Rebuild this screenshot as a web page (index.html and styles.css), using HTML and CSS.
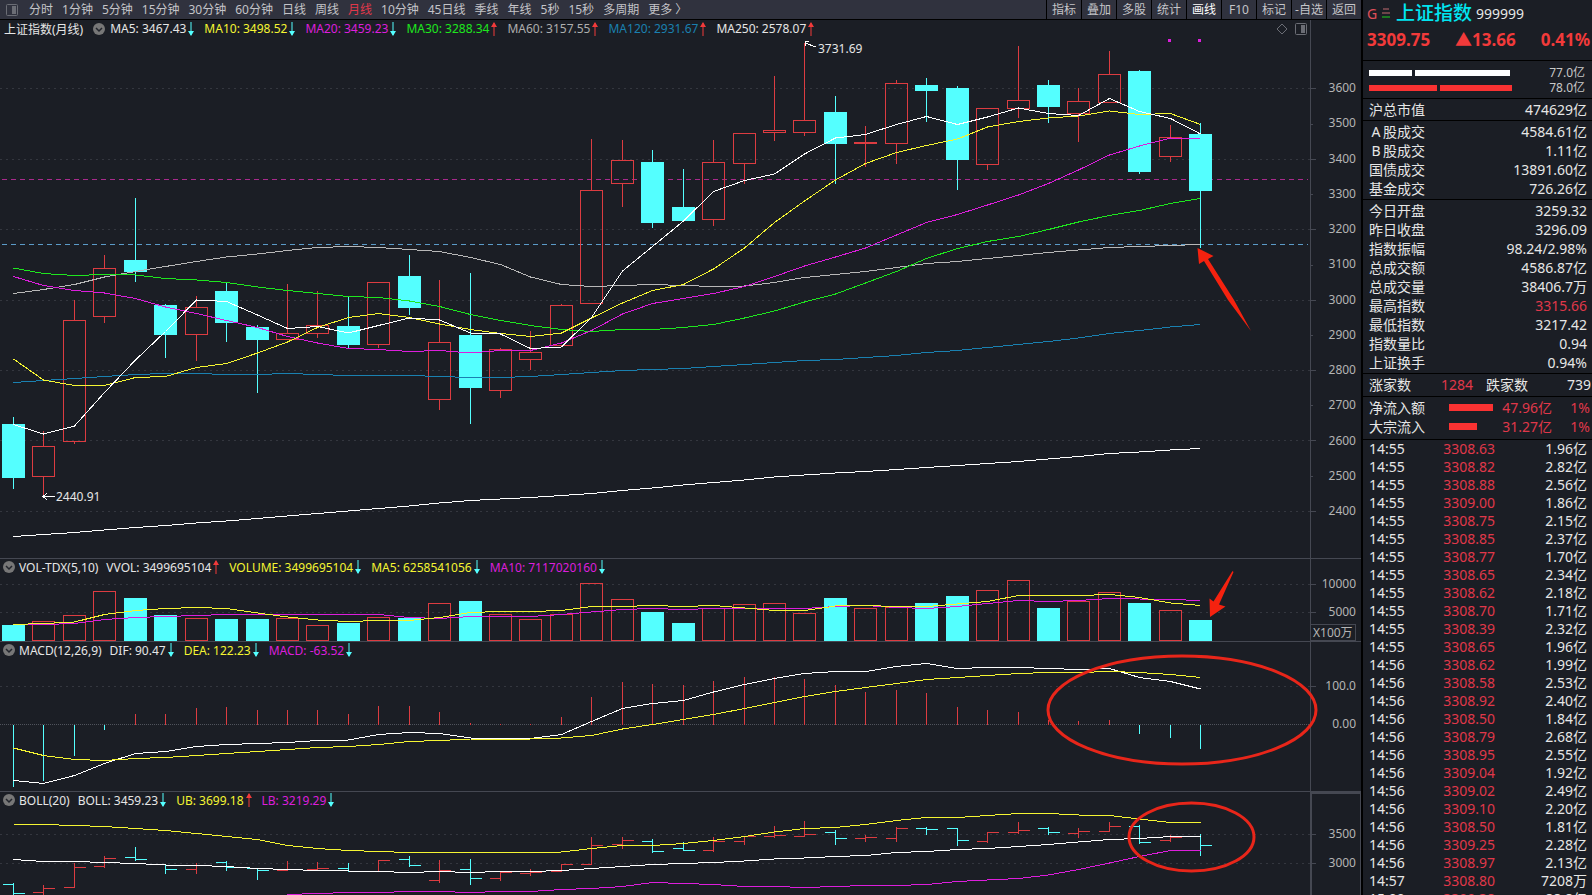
FILE: index.html
```html
<!DOCTYPE html>
<html lang="zh-CN">
<head>
    <meta charset="UTF-8">
    <meta name="viewport" content="width=device-width, initial-scale=1.0">
    <title>上证指数 999999</title>
    <link rel="stylesheet" href="styles.css">
</head>
<body>
    <svg class="sprite" aria-hidden="true">
        <symbol id="up" viewBox="0 0 6 14"><path d="M3 1V14" stroke="#f23a3a" fill="none"/><path d="M0 5L3 0L6 5Z" fill="#f23a3a"/></symbol>
        <symbol id="down" viewBox="0 0 6 14"><path d="M3 0V13" stroke="#54ffff" fill="none"/><path d="M0 9L3 14L6 9Z" fill="#54ffff"/></symbol>
        <symbol id="fold" viewBox="0 0 12 12"><circle cx="6" cy="6" r="6" fill="#777"/><path d="M3 5L6 8L9 5" stroke="#22252c" stroke-width="1.5" fill="none"/></symbol>
        <symbol id="dock" viewBox="0 0 12 12"><rect x=".5" y=".5" width="11" height="11" rx="1" stroke="#6b6d75" fill="none"/><rect x="6" y="2" width="4" height="8" fill="#6b6d75"/></symbol>
    </svg>

    <div class="workspace">
        <nav class="toolbar">
            <div class="periods">
                <button class="icon-btn" aria-label="侧栏"><svg class="dock-icon"><use href="#dock"/></svg></button>
                <button>分时</button>
                <button>1分钟</button>
                <button>5分钟</button>
                <button>15分钟</button>
                <button>30分钟</button>
                <button>60分钟</button>
                <button>日线</button>
                <button>周线</button>
                <button class="active">月线</button>
                <button>10分钟</button>
                <button>45日线</button>
                <button>季线</button>
                <button>年线</button>
                <button>5秒</button>
                <button>15秒</button>
                <button>多周期</button>
                <button>更多 〉</button>
            </div>
            <div class="tools">
                <button>指标</button>
                <button>叠加</button>
                <button>多股</button>
                <button>统计</button>
                <button class="bright">画线</button>
                <button>F10</button>
                <button>标记</button>
                <button>-自选</button>
                <button>返回</button>
            </div>
        </nav>

        <main class="charts">
            <section class="pane pane-main">
                <svg class="plot" id="mainPlot" viewBox="0 20 1310 538" preserveAspectRatio="none"></svg>
                <div class="legend legend-main">
                    <span class="name">上证指数(月线)</span>
                    <svg class="fold-icon"><use href="#fold"/></svg>
                    <span class="item">MA5: 3467.43<svg class="arrow"><use href="#down"/></svg></span>
                    <span class="item yellow">MA10: 3498.52<svg class="arrow"><use href="#down"/></svg></span>
                    <span class="item magenta">MA20: 3459.23<svg class="arrow"><use href="#down"/></svg></span>
                    <span class="item green">MA30: 3288.34<svg class="arrow"><use href="#up"/></svg></span>
                    <span class="item grey">MA60: 3157.55<svg class="arrow"><use href="#up"/></svg></span>
                    <span class="item blue">MA120: 2931.67<svg class="arrow"><use href="#up"/></svg></span>
                    <span class="item">MA250: 2578.07<svg class="arrow"><use href="#up"/></svg></span>
                    <span class="corner">
                        <svg class="diamond-icon" viewBox="0 0 12 12"><path d="M6 1L11 6L6 11L1 6Z" stroke="#6b6d75" fill="none"/></svg>
                        <svg class="dock-icon"><use href="#dock"/></svg>
                    </span>
                </div>
                <ul class="axis">
                    <li>3600</li>
                    <li>3500</li>
                    <li>3400</li>
                    <li>3300</li>
                    <li>3200</li>
                    <li>3100</li>
                    <li>3000</li>
                    <li>2900</li>
                    <li>2800</li>
                    <li>2700</li>
                    <li>2600</li>
                    <li>2500</li>
                    <li>2400</li>
                </ul>
                <span class="mark mark-high">3731.69</span>
                <span class="mark mark-low">2440.91</span>
            </section>

            <section class="pane pane-vol">
                <svg class="plot" id="volPlot" viewBox="0 559 1310 82" preserveAspectRatio="none"></svg>
                <div class="legend">
                    <svg class="fold-icon"><use href="#fold"/></svg>
                    <span class="name">VOL-TDX(5,10)</span>
                    <span class="item">VVOL: 3499695104<svg class="arrow"><use href="#up"/></svg></span>
                    <span class="item yellow">VOLUME: 3499695104<svg class="arrow"><use href="#down"/></svg></span>
                    <span class="item yellow">MA5: 6258541056<svg class="arrow"><use href="#down"/></svg></span>
                    <span class="item magenta">MA10: 7117020160<svg class="arrow"><use href="#down"/></svg></span>
                </div>
                <ul class="axis">
                    <li>10000</li>
                    <li>5000</li>
                    <li class="unit">X100万</li>
                </ul>
            </section>

            <section class="pane pane-macd">
                <svg class="plot" id="macdPlot" viewBox="0 642 1310 149" preserveAspectRatio="none"></svg>
                <div class="legend">
                    <svg class="fold-icon"><use href="#fold"/></svg>
                    <span class="name">MACD(12,26,9)</span>
                    <span class="item">DIF: 90.47<svg class="arrow"><use href="#down"/></svg></span>
                    <span class="item yellow">DEA: 122.23<svg class="arrow"><use href="#down"/></svg></span>
                    <span class="item magenta">MACD: -63.52<svg class="arrow"><use href="#down"/></svg></span>
                </div>
                <ul class="axis">
                    <li>100.0</li>
                    <li>0.00</li>
                </ul>
            </section>

            <section class="pane pane-boll">
                <svg class="plot" id="bollPlot" viewBox="0 792 1310 103" preserveAspectRatio="none"></svg>
                <div class="legend">
                    <svg class="fold-icon"><use href="#fold"/></svg>
                    <span class="name">BOLL(20)</span>
                    <span class="item">BOLL: 3459.23<svg class="arrow"><use href="#down"/></svg></span>
                    <span class="item yellow">UB: 3699.18<svg class="arrow"><use href="#up"/></svg></span>
                    <span class="item magenta">LB: 3219.29<svg class="arrow"><use href="#down"/></svg></span>
                </div>
                <ul class="axis">
                    <li>3500</li>
                    <li>3000</li>
                </ul>
            </section>

            <!-- hand-drawn notes over all four panes -->
            <svg class="notes" viewBox="0 20 1361 875" preserveAspectRatio="none">
                <path class="note-fill" d="M1197.5 248L1213.5 256L1208 259L1234 300L1251 331L1228 300L1204 261L1199 264Z"/>
                <path class="note-fill" d="M1210 617L1209.5 598.5L1213.5 601.5L1232.5 571L1233.5 572L1219 604.5L1225.5 606.5Z"/>
                <ellipse class="note-line" cx="1182" cy="710" rx="134" ry="54"/>
                <ellipse class="note-line" cx="1191.5" cy="837" rx="62.5" ry="34"/>
            </svg>
        </main>
    </div>

    <aside class="quote">
        <header class="quote-head">
            <div class="title">
                <span class="flag">G</span>
                <svg class="menu-icon" viewBox="0 0 8 12"><path d="M1 2H7M0 6H8" stroke="#c06a70"/><path d="M0 10H8" stroke="#1fd01f"/></svg>
                <h1>上证指数</h1>
                <span class="code">999999</span>
            </div>
            <div class="price">
                <span>3309.75</span>
                <span>▲13.66</span>
                <span>0.41%</span>
            </div>
        </header>

        <div class="group strength">
            <div class="row"><span class="bars white"><i style="width:43px"></i><i style="width:95px"></i></span><span>77.0亿</span></div>
            <div class="row"><span class="bars red-bar"><i style="width:68px"></i><i style="width:72px"></i></span><span>78.0亿</span></div>
        </div>

        <dl class="group">
            <div class="row"><dt>沪总市值</dt><dd>474629亿</dd></div>
        </dl>
        <dl class="group">
            <div class="row"><dt><span class="wide">A</span>股成交</dt><dd>4584.61亿</dd></div>
            <div class="row"><dt><span class="wide">B</span>股成交</dt><dd>1.11亿</dd></div>
            <div class="row"><dt>国债成交</dt><dd>13891.60亿</dd></div>
            <div class="row"><dt>基金成交</dt><dd>726.26亿</dd></div>
        </dl>
        <dl class="group">
            <div class="row"><dt>今日开盘</dt><dd>3259.32</dd></div>
            <div class="row"><dt>昨日收盘</dt><dd>3296.09</dd></div>
            <div class="row"><dt>指数振幅</dt><dd>98.24/2.98%</dd></div>
            <div class="row"><dt>总成交额</dt><dd>4586.87亿</dd></div>
            <div class="row"><dt>总成交量</dt><dd>38406.7万</dd></div>
            <div class="row"><dt>最高指数</dt><dd class="red">3315.66</dd></div>
            <div class="row"><dt>最低指数</dt><dd>3217.42</dd></div>
            <div class="row"><dt>指数量比</dt><dd>0.94</dd></div>
            <div class="row"><dt>上证换手</dt><dd>0.94%</dd></div>
        </dl>
        <div class="group breadth">
            <span>涨家数</span><span class="red">1284</span><span>跌家数</span><span>739</span>
        </div>
        <div class="group flow">
            <span>净流入额</span><i class="flow-bar" style="width:44px"></i><span class="red">47.96亿</span><span class="red">1%</span>
            <span>大宗流入</span><i class="flow-bar" style="width:28px"></i><span class="red">31.27亿</span><span class="red">1%</span>
        </div>

        <div class="group ticks">
            <table>
                <tbody>
                    <tr><td>14:55</td><td>3308.63</td><td>1.96亿</td></tr>
                    <tr><td>14:55</td><td>3308.82</td><td>2.82亿</td></tr>
                    <tr><td>14:55</td><td>3308.88</td><td>2.56亿</td></tr>
                    <tr><td>14:55</td><td>3309.00</td><td>1.86亿</td></tr>
                    <tr><td>14:55</td><td>3308.75</td><td>2.15亿</td></tr>
                    <tr><td>14:55</td><td>3308.85</td><td>2.37亿</td></tr>
                    <tr><td>14:55</td><td>3308.77</td><td>1.70亿</td></tr>
                    <tr><td>14:55</td><td>3308.65</td><td>2.34亿</td></tr>
                    <tr><td>14:55</td><td>3308.62</td><td>2.18亿</td></tr>
                    <tr><td>14:55</td><td>3308.70</td><td>1.71亿</td></tr>
                    <tr><td>14:55</td><td>3308.39</td><td>2.32亿</td></tr>
                    <tr><td>14:55</td><td>3308.65</td><td>1.96亿</td></tr>
                    <tr><td>14:56</td><td>3308.62</td><td>1.99亿</td></tr>
                    <tr><td>14:56</td><td>3308.58</td><td>2.53亿</td></tr>
                    <tr><td>14:56</td><td>3308.92</td><td>2.40亿</td></tr>
                    <tr><td>14:56</td><td>3308.50</td><td>1.84亿</td></tr>
                    <tr><td>14:56</td><td>3308.79</td><td>2.68亿</td></tr>
                    <tr><td>14:56</td><td>3308.95</td><td>2.55亿</td></tr>
                    <tr><td>14:56</td><td>3309.04</td><td>1.92亿</td></tr>
                    <tr><td>14:56</td><td>3309.02</td><td>2.49亿</td></tr>
                    <tr><td>14:56</td><td>3309.10</td><td>2.20亿</td></tr>
                    <tr><td>14:56</td><td>3308.50</td><td>1.81亿</td></tr>
                    <tr><td>14:56</td><td>3309.25</td><td>2.28亿</td></tr>
                    <tr><td>14:56</td><td>3308.97</td><td>2.13亿</td></tr>
                    <tr><td>14:57</td><td>3308.80</td><td>7208万</td></tr>
                    <tr><td>15:00</td><td>3309.38</td><td>88.8亿</td></tr>
                </tbody>
            </table>
        </div>
    </aside>

    <script src="script.js"></script>
</body>
</html>
```

FILE: styles.css
```css
:root {
    --bg: #1b1e25;
    --bar: #30323e;
    --line: #454852;
    --text: #e6e6e6;
    --muted: #b4b4b4;
    --red: #f23a3a;
    --tick-red: #e0384a;
    --cyan: #54ffff;
    --yellow: #f5f532;
    --magenta: #dc1edc;
    --green: #1ee61e;
    --blue: #1a80b0;
    --note: #f5220f;
}

* {
    margin: 0;
    padding: 0;
    box-sizing: border-box;
}

body {
    font-family: 'Noto Sans', 'Noto Sans CJK SC', sans-serif;
    font-size: 12px;
    background-color: var(--bg);
    color: var(--text);
    height: 100vh;
    overflow: hidden;
    display: grid;
    grid-template-columns: minmax(0, 1fr) 231px;
}

button {
    font: inherit;
    color: #c4c4c8;
    background: none;
    border: none;
    cursor: pointer;
    white-space: nowrap;
}

.sprite {
    display: none;
}

.workspace {
    display: flex;
    flex-direction: column;
    height: 100vh;
}

/* toolbar */
.toolbar {
    display: flex;
    justify-content: space-between;
    height: 20px;
    background-color: var(--bar);
    border-bottom: 1px solid #000;
    line-height: 18px;
}

.periods {
    display: flex;
    gap: 9px;
    padding-left: 6px;
}

.periods .icon-btn {
    margin-right: 2px;
}

.dock-icon,
.fold-icon,
.diamond-icon {
    display: block;
    width: 12px;
    height: 12px;
    flex: none;
}

.periods .active {
    color: var(--tick-red);
}

.tools {
    display: flex;
}

.tools button {
    width: 35px;
    border-left: 1px solid #000;
}

.tools .bright {
    color: #fff;
}

/* chart panes */
.charts {
    position: relative;
    flex: 1;
    display: grid;
    grid-template-rows: 538fr 83fr 150fr 104fr;
    min-height: 0;
}

.pane {
    position: relative;
    display: grid;
    grid-template-columns: minmax(0, 1fr) 51px;
    grid-template-rows: minmax(0, 1fr);
    min-height: 0;
}

.pane + .pane {
    border-top: 1px solid var(--line);
}

.plot {
    grid-area: 1 / 1;
    width: 100%;
    height: 100%;
    overflow: visible;
}

.legend {
    grid-area: 1 / 1;
    align-self: start;
    display: flex;
    align-items: center;
    height: 16px;
    padding-left: 3px;
    gap: 10px;
    white-space: nowrap;
}

.legend .fold-icon + .name {
    margin-left: -6px;
    margin-right: -2px;
}

.legend-main {
    height: 17px;
    padding-left: 4px;
    padding-right: 3px;
}

.legend .fold-icon + .item {
    margin-left: -5px;
}

.item {
    display: flex;
    align-items: center;
    gap: 2px;
}

.arrow {
    width: 6px;
    height: 14px;
}

.corner {
    display: flex;
    gap: 7px;
    margin-left: auto;
}

.yellow { color: var(--yellow); }
.magenta { color: var(--magenta); }
.green { color: var(--green); }
.grey { color: #aeaeae; }
.blue { color: var(--blue); }
.red { color: var(--tick-red); }

.axis {
    list-style: none;
    border-left: 1px solid var(--line);
    color: var(--muted);
    text-align: right;
    line-height: 16px;
    padding-right: 5px;
    display: flex;
    flex-direction: column;
}

.pane-main .axis {
    justify-content: space-between;
    padding-top: 60px;
    padding-bottom: 39px;
}

.pane-vol .axis {
    justify-content: flex-end;
    gap: 12px;
}

.pane-macd .axis {
    padding-top: 36px;
    gap: 22px;
}

.pane-boll .axis {
    padding-top: 32px;
    gap: 13px;
    border: 2px solid var(--line);
    border-width: 2px 1px 0 2px;
    padding-right: 4px;
}

.axis .unit {
    align-self: flex-start;
    border: 1px solid var(--line);
    border-left: none;
    padding: 0 2px;
    margin-top: -8px;
    line-height: 15px;
    white-space: nowrap;
}

.mark {
    position: absolute;
    line-height: 16px;
}

.mark-high {
    left: 818px;
    top: 21px;
}

.mark-low {
    left: 56px;
    top: 469px;
}

.notes {
    position: absolute;
    inset: 0;
    width: 100%;
    height: 100%;
    pointer-events: none;
}

.note-fill {
    fill: var(--note);
}

.note-line {
    fill: none;
    stroke: #e8261a;
    stroke-width: 3;
}

/* series */
.plot * {
    fill: none;
    vector-effect: non-scaling-stroke;
    shape-rendering: crispEdges;
}

.plot .grid { stroke: #34373f; stroke-dasharray: 2 4; }
.plot .grid-tick { stroke: var(--line); }
.plot .zero { stroke: #50535c; stroke-dasharray: 1 1; }
.plot .level-magenta { stroke: #a82a8c; stroke-dasharray: 5 4; }
.plot .level-blue { stroke: #5b9bc8; stroke-dasharray: 5 4; }
.plot .up { stroke: #dc3c41; }
.plot .down { stroke: var(--cyan); }
.plot rect.down { fill: var(--cyan); }
.plot .dot { fill: var(--magenta); }
.plot .s-white { stroke: #fff; }
.plot .s-light { stroke: #b8b8b8; }
.plot .s-yellow { stroke: var(--yellow); }
.plot .s-magenta { stroke: var(--magenta); }
.plot .s-green { stroke: var(--green); }
.plot .s-blue { stroke: var(--blue); }

/* quote sidebar */
.quote {
    border-left: 2px solid #000;
    height: 100vh;
    overflow: hidden;
    font-size: 14px;
    line-height: 19px;
}

.quote-head {
    height: 60px;
}

.title {
    display: flex;
    align-items: center;
    height: 26px;
    padding-left: 4px;
}

.title .flag {
    width: 15px;
    color: #e0505a;
    font-size: 14px;
}

.title .menu-icon {
    width: 8px;
    height: 12px;
    margin-right: 6px;
}

.title h1 {
    font-size: 19px;
    font-weight: 500;
    color: #00e5f0;
    margin-right: 4px;
}

.price {
    display: flex;
    justify-content: space-between;
    padding: 4px 2px 0 4px;
    font-size: 17px;
    font-weight: bold;
    color: var(--red);
}

.group {
    border-top: 1px solid #000;
    padding: 1px 5px 1px 6px;
}

.row {
    display: flex;
    justify-content: space-between;
}

.wide {
    display: inline-block;
    width: 14px;
    text-align: center;
}

.strength {
    height: 38px;
    padding: 4px 7px 3px 6px;
    font-size: 12px;
    line-height: 15px;
}

.strength .row {
    align-items: center;
    color: #c8c8c8;
}

.bars {
    display: flex;
    gap: 3px;
}

.bars i {
    height: 6px;
    background-color: #fff;
}

.bars.red-bar i,
.flow-bar {
    background-color: #fa3232;
}

.breadth {
    display: grid;
    grid-template-columns: 72px 45px 1fr auto;
    padding: 1px 1px 2px 6px;
}

.flow {
    display: grid;
    grid-template-columns: 80px 46px 1fr 38px;
    align-items: center;
    padding: 1px 2px 3px 6px;
    text-align: right;
}

.flow span:nth-child(4n + 1) {
    text-align: left;
}

.flow-bar {
    height: 7px;
}

.ticks {
    padding: 0 5px 0 6px;
}

.ticks table {
    width: 100%;
    border-collapse: collapse;
    table-layout: fixed;
}

.ticks td {
    height: 18px;
    line-height: 18px;
    text-align: right;
}

.ticks td:first-child {
    width: 40px;
    text-align: left;
}

.ticks td:nth-child(2) {
    width: 86px;
    color: var(--tick-red);
}
```

FILE: script.js
```js
const NS = 'http://www.w3.org/2000/svg';
const COUNT = 40;

// centre of bar i
function barX(i) {
    return Math.round(13 + 30.44 * i) + 0.5;
}

function add(plot, tag, cls, attrs) {
    const el = document.createElementNS(NS, tag);
    el.setAttribute('class', cls);
    for (const key in attrs) el.setAttribute(key, attrs[key]);
    plot.appendChild(el);
}

function path(plot, cls, d) {
    add(plot, 'path', cls, { d });
}

function series(plot, cls, values, start = 0) {
    const points = values.map((y, i) => barX(i + start) + ',' + y).join(' ');
    add(plot, 'polyline', cls, { points });
}

function grid(plot, rows) {
    rows.forEach(y => {
        path(plot, 'grid', `M0 ${y}H1310`);
        path(plot, 'grid-tick', `M1310 ${y}H1316`);
    });
}

// [high, top, bottom, low, direction]
const candles = [
    [417, 424, 478, 489, 'down'], [431, 446, 476, 497, 'up'], [300, 320, 441, 444, 'up'], [255, 268, 316, 323, 'up'],
    [198, 260, 272, 282, 'down'], [304, 305, 335, 358, 'down'], [296, 307, 334, 361, 'up'], [283, 291, 323, 342, 'down'],
    [325, 327, 340, 393, 'down'], [284, 333, 339, 340, 'up'], [291, 325, 333, 338, 'up'], [297, 326, 345, 348, 'down'],
    [282, 282, 344, 348, 'up'], [255, 276, 308, 315, 'down'], [280, 342, 399, 410, 'up'], [273, 335, 388, 424, 'down'],
    [348, 349, 390, 398, 'up'], [331, 352, 359, 370, 'up'], [304, 305, 345, 346, 'up'], [139, 190, 303, 304, 'up'],
    [140, 160, 183, 207, 'up'], [150, 162, 223, 228, 'down'], [169, 207, 221, 221, 'down'], [140, 162, 219, 226, 'up'],
    [133, 133, 163, 184, 'up'], [76, 130, 132, 141, 'up'], [43, 120, 132, 136, 'up'], [96, 112, 144, 184, 'down'],
    [126, 142, 143, 167, 'up'], [80, 83, 143, 164, 'up'], [78, 85, 91, 122, 'down'], [86, 88, 160, 190, 'down'],
    [108, 108, 164, 170, 'up'], [46, 100, 108, 118, 'up'], [80, 85, 107, 123, 'down'], [88, 101, 113, 142, 'up'],
    [51, 74, 102, 103, 'up'], [70, 71, 172, 174, 'down'], [125, 137, 156, 162, 'up'], [123, 134, 191, 248, 'down']
];

const volumeTop = [625, 621, 615, 591, 598, 615, 618, 619, 619, 618, 625, 623, 617, 618, 603, 601, 614, 619, 614, 583,
    599, 612, 623, 608, 604, 603, 613, 598, 608, 607, 603, 596, 590, 580, 608, 601, 592, 603, 610, 620];

const macdEnd = [787, 781, 756, 730, 714, 714, 708, 707, 710, 710, 710, 714, 706, 706, 712, 723, 724, 724, 717, 697,
    682, 684, 685, 681, 677, 677, 679, 685, 692, 690, 693, 707, 710, 712, 720, 721, 720, 734, 738, 749];

function drawMain() {
    const plot = document.getElementById('mainPlot');
    grid(plot, [88.5, 159.5, 229.5, 300.5, 370.5, 440.5, 511.5]);
    [124.5, 194.5, 265.5, 335.5, 405.5, 476.5].forEach(y => path(plot, 'grid-tick', `M1310 ${y}H1313`));
    path(plot, 'level-magenta', 'M2 179.5H1308');
    path(plot, 'level-blue', 'M2 244.5H1308');

    candles.forEach(([high, top, bottom, low, dir], i) => {
        const x = barX(i);
        // the filled body already covers its own bottom edge
        const height = dir === 'down' ? bottom - top - 1 : bottom - top;
        path(plot, dir, `M${x} ${high}V${top}M${x} ${bottom}V${low}`);
        add(plot, 'rect', dir, { x: x - 11, y: top + 0.5, width: 22, height });
    });

    series(plot, 's-light', [293.5, 289.5, 284.5, 277, 271.5, 266.5, 261.5, 257, 254, 250.5, 247.5, 246.5, 247.5, 249.5, 251.5, 257.5, 264.5, 277, 284.5, 286.5,
        285.5, 284.5, 285.5, 286.5, 286, 282.5, 277.5, 274.5, 271.5, 267.5, 263.5, 261.5, 258.5, 255.5, 252.5, 250, 247.5, 246.5, 245.5, 244.5]);
    series(plot, 's-blue', [382.5, 380.5, 378.5, 376.5, 374.5, 373.5, 373.5, 374.5, 374.5, 373.5, 374.5, 375.5, 375.5, 375.5, 376.5, 377.5, 377.5, 376.5, 374.5, 372.5,
        370.5, 369.5, 368.5, 366.5, 364.5, 362.5, 360.5, 359.5, 357.5, 355.5, 352.5, 350.5, 347.5, 344.5, 341.5, 338, 333.5, 330.5, 327, 324.5]);
    series(plot, 's-white', [536.5, 534.5, 532.5, 530, 527.5, 525.5, 523, 521, 518.5, 516, 513.5, 511, 508.5, 506, 503, 500.5, 499, 497.5, 495.5, 493.5,
        490.5, 488, 485, 482.5, 480, 477, 475, 473, 471.5, 469.5, 467.5, 465.5, 463.5, 461.5, 459, 456.5, 453.5, 452, 450, 448.5]);
    series(plot, 's-green', [268, 273.5, 275.5, 274.5, 275, 278.5, 280, 282.5, 287, 290.5, 293.5, 296.5, 297.5, 301, 306.5, 314.5, 320.5, 325.5, 329.5, 331.5,
        329.5, 329.5, 327.5, 324.5, 318, 311, 302, 294, 283, 271.5, 258.5, 248.5, 241.5, 236.5, 229.5, 222, 215.5, 210.5, 203.5, 198.5]);
    series(plot, 's-magenta', [276.5, 285.5, 290.5, 293, 298.5, 307, 313.5, 320.5, 327.5, 336.5, 343, 348.5, 349.5, 351.5, 350.5, 353, 350.5, 350.5, 343, 330.5,
        314, 303.5, 298.5, 293.5, 286.5, 276.5, 266, 257, 248, 235, 222.5, 214.5, 205, 195, 183.5, 170, 155, 146, 138, 138.5]);
    series(plot, 's-yellow', [359, 380, 385.5, 385.5, 377.5, 376.5, 367.5, 363.5, 353, 342, 327.5, 317.5, 313.5, 317.5, 324, 329.5, 333.5, 336.5, 333, 318,
        303, 290.5, 284.5, 269, 248, 222.5, 201, 180, 163.5, 152.5, 145.5, 139, 127, 121.5, 118, 116, 111, 114.5, 113.5, 124.5]);
    series(plot, 's-white', [424.5, 434, 426, 392.5, 360, 331.5, 300, 301.5, 315, 328.5, 326.5, 333, 325.5, 318, 320, 333, 334, 348.5, 347, 317.5,
        271, 246.5, 221, 191.5, 180.5, 174, 154, 138, 134.5, 124.5, 116.5, 124.5, 117, 108, 113.5, 115.5, 98.5, 111.5, 118.5, 134]);

    // pointers for the highest and lowest price, and the two event dots
    path(plot, 's-white', 'M805 43L816 47M809 41H805V46');
    path(plot, 's-white', 'M43 496.5H55M47 493L43 496.5L47 500');
    add(plot, 'rect', 'dot', { x: 1168, y: 39, width: 3, height: 3 });
    add(plot, 'rect', 'dot', { x: 1198, y: 39, width: 3, height: 3 });
}

function drawVolume() {
    const plot = document.getElementById('volPlot');
    grid(plot, [584.5, 612.5]);
    volumeTop.forEach((top, i) => {
        add(plot, 'rect', candles[i][4], { x: barX(i) - 11, y: top + 0.5, width: 22, height: 640 - top });
    });
    series(plot, 's-magenta', [624, 624.5, 623.5, 619.5, 617.5, 616.5, 615.5, 614.5, 614.5, 614.5, 614.5, 614.5, 614.5, 617.5, 618.5, 616.5, 616.5, 616.5, 614.5, 612,
        609.5, 608.5, 609.5, 608.5, 608.5, 608.5, 608.5, 606.5, 605.5, 607.5, 608.5, 606.5, 603.5, 600.5, 601.5, 600.5, 598.5, 599, 599.5, 600.5]);
    series(plot, 's-yellow', [624.5, 623.5, 622, 614.5, 610.5, 608.5, 607.5, 608.5, 613, 617, 620, 621.5, 620.5, 620.5, 617.5, 612.5, 611.5, 611.5, 610.5, 606.5,
        606.5, 605.5, 606.5, 605.5, 608, 610.5, 610.5, 606, 605.5, 606.5, 606.5, 604, 601.5, 595.5, 595.5, 595.5, 594.5, 597.5, 603, 605.5]);
}

function drawMacd() {
    const plot = document.getElementById('macdPlot');
    grid(plot, [686.5]);
    path(plot, 'zero', 'M0 724.5H1310');
    macdEnd.forEach((end, i) => {
        path(plot, end > 724 ? 'down' : 'up', `M${barX(i)} 724.5V${end}`);
    });
    series(plot, 's-white', [780.5, 783.5, 775.5, 763.5, 753.5, 751.5, 746.5, 744.5, 743.5, 742.5, 740.5, 740, 734.5, 732.5, 733.5, 738, 738.5, 738.5, 734.5, 721.5,
        708.5, 703.5, 700.5, 692, 684.5, 678.5, 673.5, 671.5, 671.5, 666.5, 663.5, 668.5, 667.5, 667.5, 668.5, 669.5, 668.5, 677.5, 681.5, 689]);
    series(plot, 's-yellow', [748, 755.5, 759.5, 760.5, 758.5, 757.5, 755.5, 753.5, 751.5, 749.5, 747.5, 746.5, 744.5, 741.5, 740.5, 739, 739, 739, 738, 735.5,
        729, 724.5, 719.5, 714.5, 708.5, 702.5, 696.5, 691.5, 687.5, 683.5, 679.5, 677.5, 675.5, 673.5, 672.5, 672.5, 671.5, 672.5, 674.5, 677.5]);
}

function drawBoll() {
    const plot = document.getElementById('bollPlot');
    // same candles on the compressed BOLL scale
    const scale = y => Math.round(834.3 + (y - 123.5) * 0.165);
    grid(plot, [834.5, 863.5]);
    candles.forEach(([high, top, bottom, low, dir], i) => {
        const x = barX(i);
        const open = scale(dir === 'up' ? bottom : top) + 0.5;
        const close = scale(dir === 'up' ? top : bottom) + 0.5;
        path(plot, dir, `M${x - 11} ${open}H${x}M${x} ${close}H${x + 11}M${x} ${scale(high)}V${Math.min(scale(low) + 1, 895)}`);
    });
    series(plot, 's-magenta', [894.5, 893.5, 892.5, 892.5, 891.5, 891.5, 892.5, 891.5, 891.5, 889.5, 888.5,
        886.5, 882.5, 883.5, 884.5, 886.5, 886.5, 887.5, 886.5, 885.5, 885.5, 884.5, 881.5, 880, 878.5, 875, 869.5, 863, 856.5, 850.5, 850.5], COUNT - 31);
    series(plot, 's-white', [859.5, 861.5, 861.5, 862.5, 863.5, 865, 865.5, 866.5, 868.5, 869.5, 870.5, 871, 871.5, 872.5, 871.5, 872.5, 871.5, 871.5, 870.5, 868.5,
        866.5, 864.5, 863.5, 862.5, 861, 859, 858, 856.5, 855.5, 852.5, 851.5, 849.5, 848.5, 846.5, 844.5, 842, 839.5, 838.5, 836.5, 836.5]);
    series(plot, 's-yellow', [824.5, 824.5, 825.5, 826.5, 828.5, 830.5, 833.5, 836.5, 839.5, 845.5, 848.5, 850.5, 851.5, 852.5, 852.5, 852.5, 852.5, 852.5, 852, 848.5,
        845.5, 845.5, 843.5, 840.5, 836.5, 832, 828.5, 827.5, 824.5, 820.5, 817.5, 817.5, 815.5, 813.5, 813.5, 815, 815.5, 819, 822.5, 822.5]);
}

drawMain();
drawVolume();
drawMacd();
drawBoll();
```
